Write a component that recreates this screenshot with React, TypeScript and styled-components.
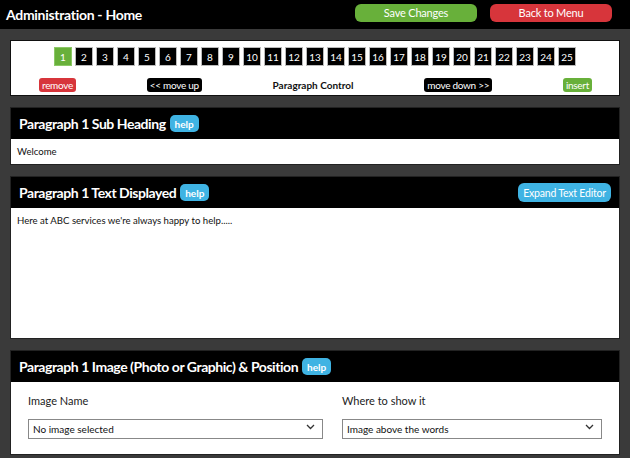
import React from 'react';
import styled, { createGlobalStyle } from 'styled-components';

const GlobalStyle = createGlobalStyle`
  body {
    margin: 0;
    background: #3a3a3a;
    font-family: Lato, 'Open Sans', sans-serif;
  }
`;

type ToneProps = {
  tone: 'green' | 'red' | 'black' | 'blue';
};

const tones = {
  green: '#68b03a',
  red: '#d7353b',
  black: '#000',
  blue: '#3fb3e3',
};

const pages = Array.from({ length: 25 }, (_, i) => i + 1);

const App = () => {
  const current = 1;
  return (
    <>
      <GlobalStyle />
      <TopBar>
        <Title>Administration - Home</Title>
        <TopActions>
          <TopButton tone='green'>Save Changes</TopButton>
          <TopButton tone='red'>Back to Menu</TopButton>
        </TopActions>
      </TopBar>
      <Main>
        <ControlPanel>
          <PageList>
            {pages.map((n) => (
              <PageBox key={n} active={n === current}>
                {n}
              </PageBox>
            ))}
          </PageList>
          <ControlRow>
            <SmallButton tone='red'>remove</SmallButton>
            <SmallButton tone='black'>&lt;&lt; move up</SmallButton>
            <ControlLabel>Paragraph Control</ControlLabel>
            <SmallButton tone='black'>move down &gt;&gt;</SmallButton>
            <SmallButton tone='green'>insert</SmallButton>
          </ControlRow>
        </ControlPanel>

        <Section>
          <SectionHead>
            <SectionTitle>
              Paragraph 1 Sub Heading
              <HelpButton>help</HelpButton>
            </SectionTitle>
          </SectionHead>
          <SectionBody height={25}>Welcome</SectionBody>
        </Section>

        <Section>
          <SectionHead>
            <SectionTitle>
              Paragraph 1 Text Displayed
              <HelpButton>help</HelpButton>
            </SectionTitle>
            <ExpandButton>Expand Text Editor</ExpandButton>
          </SectionHead>
          <SectionBody height={130}>
            Here at ABC services we're always happy to help.....
          </SectionBody>
        </Section>

        <Section>
          <SectionHead>
            <SectionTitle>
              Paragraph 1 Image (Photo or Graphic) &amp; Position
              <HelpButton>help</HelpButton>
            </SectionTitle>
          </SectionHead>
          <FieldGrid>
            <Field>
              <FieldLabel>Image Name</FieldLabel>
              <SelectWrap>
                <Select defaultValue='none'>
                  <option value='none'>No image selected</option>
                </Select>
                <Chevron />
              </SelectWrap>
            </Field>
            <Field>
              <FieldLabel>Where to show it</FieldLabel>
              <SelectWrap>
                <Select defaultValue='above'>
                  <option value='above'>Image above the words</option>
                  <option value='below'>Image below the words</option>
                </Select>
                <Chevron />
              </SelectWrap>
            </Field>
          </FieldGrid>
        </Section>
      </Main>
    </>
  );
};

const Chevron = () => (
  <ChevronIcon width='9' height='6' viewBox='0 0 9 6'>
    <path d='M1 1 L4.5 4.5 L8 1' fill='none' stroke='#333' strokeWidth='1.3' />
  </ChevronIcon>
);

const TopBar = styled.header`
  height: 29px;
  background: #000;
  display: flex;
  align-items: center;
  justify-content: space-between;
  padding: 0 18px 0 6px;
`;

const Title = styled.h1`
  margin: 0;
  color: #fff;
  font-size: 14px;
  font-weight: 700;
  letter-spacing: -0.3px;
`;

const TopActions = styled.div`
  display: flex;
  gap: 13px;
  margin-top: -4px;
`;

const TopButton = styled.button<ToneProps>`
  width: 122px;
  height: 18px;
  border: none;
  border-radius: 6px;
  background: ${(p) => tones[p.tone]};
  color: #fff;
  font-family: Lato, sans-serif;
  font-size: 11px;
  letter-spacing: -0.2px;
  padding: 0;
`;

const Main = styled.main`
  display: flex;
  flex-direction: column;
  gap: 11px;
  padding: 11px 10px 0;
`;

const ControlPanel = styled.section`
  background: #fff;
  border: 1px solid #111;
  height: 56px;
  box-sizing: border-box;
  display: flex;
  flex-direction: column;
  padding-top: 6px;
`;

const PageList = styled.div`
  display: flex;
  justify-content: center;
  gap: 3px;
`;

const PageBox = styled.span<{ active?: boolean }>`
  width: 18px;
  height: 19px;
  box-sizing: border-box;
  display: flex;
  align-items: center;
  justify-content: center;
  background: ${(p) => (p.active ? '#68b03a' : '#000')};
  border: 1px solid ${(p) => (p.active ? '#8cc866' : '#bbb')};
  color: #fff;
  font-size: 10px;
`;

const ControlRow = styled.div`
  display: flex;
  justify-content: space-between;
  align-items: center;
  padding: 0 27px 0 28px;
  margin-top: 12px;
`;

const SmallButton = styled.span<ToneProps>`
  height: 14px;
  display: inline-flex;
  align-items: center;
  padding: 0 3px;
  border-radius: 3px;
  background: ${(p) => tones[p.tone]};
  color: #fff;
  font-size: 10px;
  letter-spacing: -0.3px;
`;

const ControlLabel = styled.span`
  font-size: 10px;
  font-weight: 700;
  color: #111;
`;

const Section = styled.section`
  border: 1px solid #222;
  background: #fff;
`;

const SectionHead = styled.div`
  height: 31px;
  background: #000;
  display: flex;
  align-items: center;
  justify-content: space-between;
  padding: 0 8px 0 8px;
`;

const SectionTitle = styled.h2`
  margin: 0;
  color: #fff;
  font-size: 14px;
  font-weight: 700;
  letter-spacing: -0.45px;
  display: flex;
  align-items: center;
  gap: 4px;
`;

const HelpButton = styled.span`
  height: 17px;
  padding: 0 5px;
  border-radius: 5px;
  background: ${tones.blue};
  color: #fff;
  font-size: 10px;
  font-weight: 700;
  letter-spacing: 0;
  display: inline-flex;
  align-items: center;
`;

const ExpandButton = styled.button`
  height: 19px;
  width: 93px;
  padding: 0;
  border: none;
  border-radius: 6px;
  background: ${tones.blue};
  color: #fff;
  font-family: Lato, sans-serif;
  font-size: 10.5px;
  letter-spacing: -0.2px;
`;

const SectionBody = styled.div<{ height: number }>`
  height: ${(p) => p.height}px;
  box-sizing: border-box;
  padding: 7px 6px;
  font-size: 9.6px;
  color: #111;
`;

const FieldGrid = styled.div`
  display: grid;
  grid-template-columns: 295px 1fr;
  column-gap: 19px;
  padding: 12px 17px 15px;
`;

const Field = styled.div`
  display: flex;
  flex-direction: column;
`;

const FieldLabel = styled.label`
  font-size: 11px;
  color: #222;
  height: 14px;
  margin-bottom: 9px;
`;

const SelectWrap = styled.div`
  position: relative;
`;

const Select = styled.select`
  appearance: none;
  width: 100%;
  height: 20px;
  border: 1px solid #888;
  border-radius: 0;
  background: #fff;
  padding: 0 4px;
  font-family: Lato, sans-serif;
  font-size: 10px;
  color: #111;
`;

const ChevronIcon = styled.svg`
  position: absolute;
  right: 8px;
  top: 7px;
  pointer-events: none;
`;

export default App;
